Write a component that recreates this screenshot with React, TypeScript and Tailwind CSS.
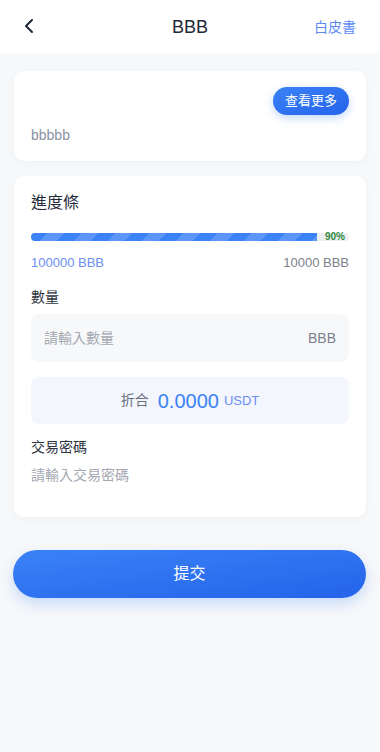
import { ChevronLeft } from "lucide-react";

const font = "font-['Liberation_Sans','Noto_Sans_CJK_TC',sans-serif]";

export default function App() {
  return (
    <div className={`min-h-[752px] w-[380px] bg-[#f7f8fa] ${font}`}>
      <div className="relative flex h-[53px] items-center justify-center bg-white">
        <button className="absolute left-[17px] top-[14px] text-[#1f2937]">
          <ChevronLeft size={24} strokeWidth={2} />
        </button>
        <h1 className="text-[18px] leading-[24px] text-[#1f2937]">BBB</h1>
        <span className="absolute right-[24px] top-[17px] text-[14px] leading-[20px] text-[#5b8af5]">白皮書</span>
      </div>

      <div className="px-[14px] pt-[18px]">
        <div className="rounded-[10px] bg-white px-[17px] pb-[16px] pt-[16px] shadow-[0_2px_8px_rgba(0,0,0,0.03)]">
          <div className="flex justify-end">
            <button className="h-[28px] rounded-full bg-gradient-to-br from-[#3b82f6] to-[#2563eb] px-[12px] text-[13px] text-white shadow-[0_3px_8px_rgba(59,130,246,0.3)]">
              查看更多
            </button>
          </div>
          <p className="mt-[10px] text-[14px] leading-[20px] text-[#8a919f]">bbbbb</p>
        </div>

        <div className="mt-[15px] rounded-[10px] bg-white px-[17px] pb-[32px] pt-[16px] shadow-[0_2px_8px_rgba(0,0,0,0.03)]">
          <h2 className="text-[16px] leading-[22px] text-[#1f2937]">進度條</h2>

          <div className="relative mt-[19px] h-[8px] w-full rounded-full bg-[#eceef1]">
            <div className="h-full w-[90%] rounded-l-full bg-[repeating-linear-gradient(135deg,#3b82f6_0px,#3b82f6_12px,#5b96f8_12px,#5b96f8_24px)]" />
            <span className="absolute right-[4px] top-[-2px] text-[10px] font-bold leading-[12px] text-[#2f8a3b]">90%</span>
          </div>

          <div className="mt-[13px] flex justify-between text-[13px] leading-[18px]">
            <span className="text-[#6c8ef5]">100000 BBB</span>
            <span className="text-[#7b818c]">10000 BBB</span>
          </div>

          <p className="mt-[15px] text-[14px] leading-[20px] text-[#2d3440]">數量</p>
          <div className="mt-[7px] flex h-[48px] items-center justify-between rounded-[8px] bg-[#f7f8fa] px-[13px] text-[14px]">
            <span className="text-[#a3a8b1]">請輸入數量</span>
            <span className="text-[#7b818c]">BBB</span>
          </div>

          <div className="mt-[15px] flex h-[47px] items-center justify-center rounded-[8px] bg-[#f3f6fd]">
            <span className="text-[14px] text-[#6b7280]">折合</span>
            <span className="ml-[9px] text-[20px] font-medium text-[#3b82f6]">0.0000</span>
            <span className="ml-[5px] text-[13px] text-[#6c8ef5]">USDT</span>
          </div>

          <p className="mt-[13px] text-[14px] leading-[20px] text-[#2d3440]">交易密碼</p>
          <p className="mt-[8px] text-[14px] leading-[20px] text-[#a3a8b1]">請輸入交易密碼</p>
        </div>

        <button className="mx-[-1px] mt-[33px] flex h-[48px] w-[353px] items-center justify-center rounded-full bg-gradient-to-br from-[#3b82f6] to-[#2563eb] text-[16px] text-white shadow-[0_6px_14px_rgba(59,130,246,0.25)]">
          提交
        </button>
      </div>
    </div>
  );
}
